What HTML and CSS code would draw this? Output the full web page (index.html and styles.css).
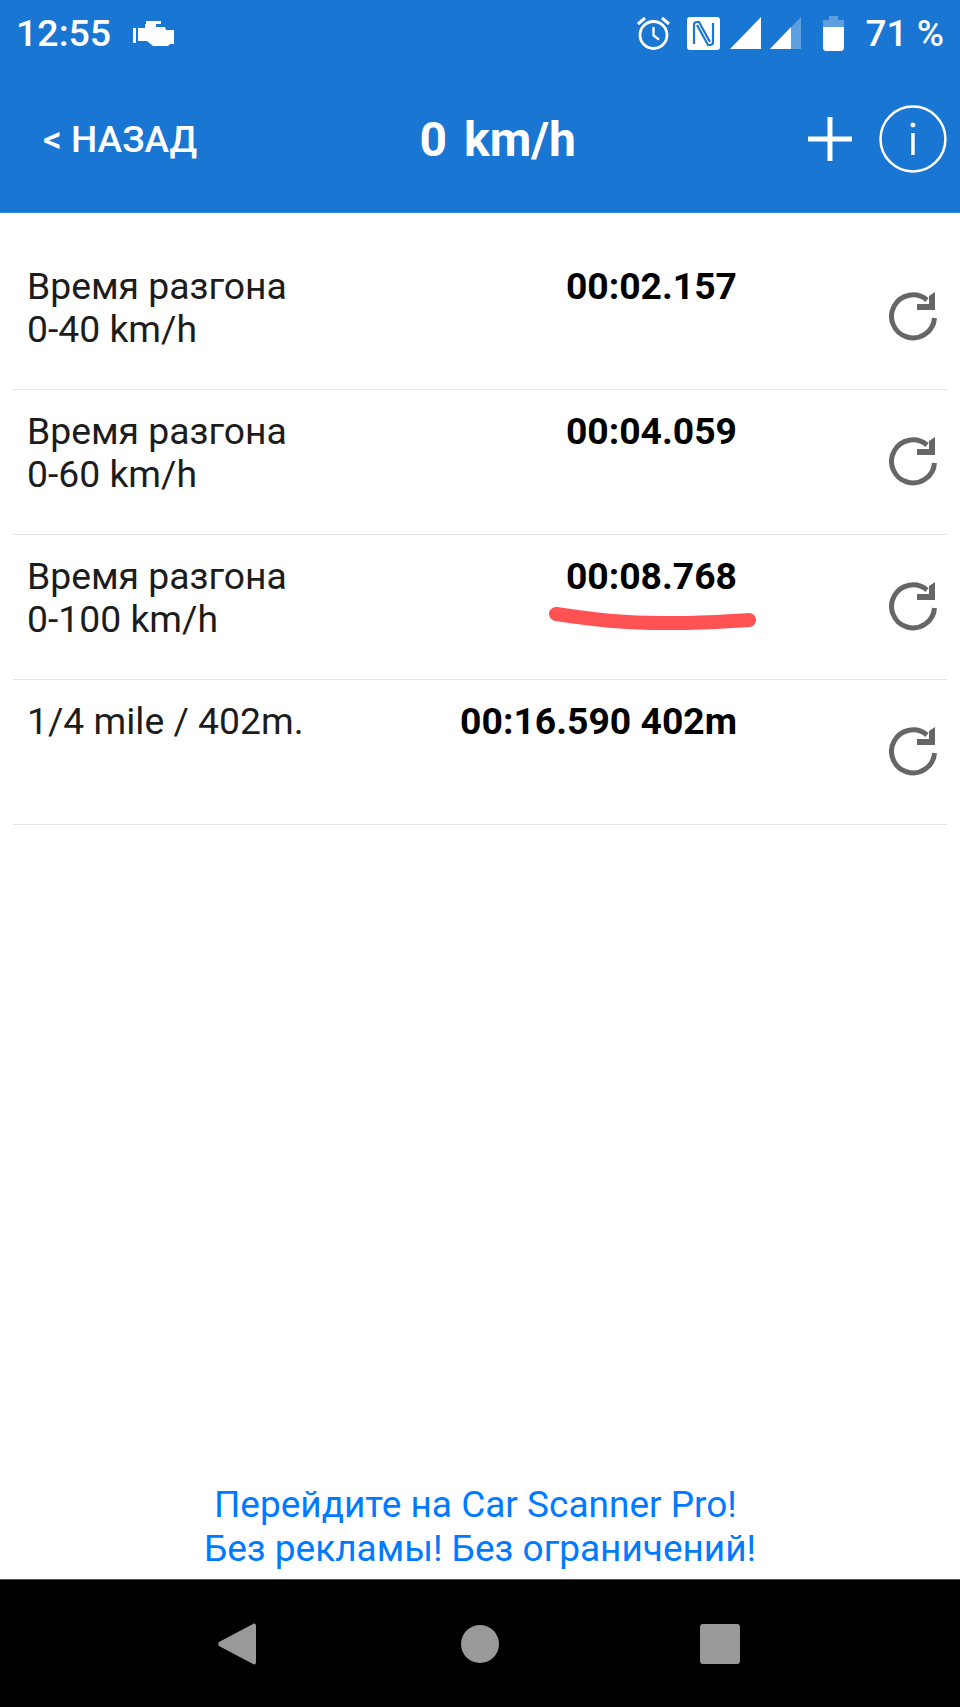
FILE: index.html
```html
<!DOCTYPE html>
<html lang="ru">
<head>
    <meta charset="UTF-8">
    <meta name="viewport" content="width=device-width, initial-scale=1.0">
    <title>Время разгона</title>
    <link rel="stylesheet" href="styles.css">
</head>
<body>
    <div class="screen">
        <header class="header">
            <div class="status-bar">
                <span class="clock">12:55</span>
                <svg class="engine" width="41" height="25" viewBox="0 0 41 25"><path d="M0 7H3V22H0ZM5 7H12V3H13V0H28V3H23V6H32L33 9H41V23H37L35 25H20L14 20H5Z" fill="#fff"/></svg>
                <div class="status-icons">
                    <svg width="33" height="34" viewBox="0 0 33 34"><circle cx="16.500" cy="19" r="13.500" fill="none" stroke="#fff" stroke-width="2.800"/><path d="M16.500 11V19.500L22 23.500" fill="none" stroke="#fff" stroke-width="2.400"/><path d="M1 8L8 2M32 8L25 2" fill="none" stroke="#fff" stroke-width="3"/></svg>
                    <svg width="33" height="33" viewBox="0 0 33 33"><rect width="33" height="33" rx="3" fill="#fff"/><path d="M7 27V8Q7 5 10 5H12L23 25M26 6V25Q26 28 23 28H21L10 8" fill="none" stroke="#1976d2" stroke-width="2.200"/></svg>
                    <svg width="31" height="32" viewBox="0 0 31 32"><path d="M31 0V32H0Z" fill="#fff"/></svg>
                    <svg class="signal" width="31" height="32" viewBox="0 0 31 32"><path d="M31 0V32H0Z" fill="#fff" opacity="0.300"/><path d="M21 10V32H0Z" fill="#fff"/></svg>
                    <svg class="battery" width="21" height="35" viewBox="0 0 21 35"><path d="M0 4H6V0H15V4H21V11H0Z" fill="#fff" opacity="0.300"/><path d="M0 11H21V33L19 35H2L0 33Z" fill="#fff"/></svg>
                    <span class="percent">71 %</span>
                </div>
            </div>
            <div class="toolbar">
                <span class="back">&lt; НАЗАД</span>
                <span class="speed">0 km/h</span>
                <svg class="plus" width="44" height="44" viewBox="0 0 44 44"><path d="M22 0V44M0 22H44" stroke="#fff" stroke-width="5"/></svg>
                <svg class="info" width="68" height="68" viewBox="0 0 68 68"><circle cx="34" cy="34" r="32.500" fill="none" stroke="#fff" stroke-width="2.500"/><circle cx="34" cy="20" r="2.500" fill="#fff"/><path d="M34 28V50" stroke="#fff" stroke-width="3.500"/></svg>
            </div>
        </header>

        <main class="list">
            <div class="row">
                <div class="label">Время разгона<br>0-40 km/h</div>
                <div class="value">00:02.157</div>
                <svg class="refresh" width="48" height="50" viewBox="0 -2 48 50"><path d="M45.500 25A21.500 21.500 0 1 1 38 7" fill="none" stroke="#666" stroke-width="5"/><path d="M46 -1V17H28V11H40V3Z" fill="#666"/></svg>
            </div>
            <div class="row">
                <div class="label">Время разгона<br>0-60 km/h</div>
                <div class="value">00:04.059</div>
                <svg class="refresh" width="48" height="50" viewBox="0 -2 48 50"><path d="M45.500 25A21.500 21.500 0 1 1 38 7" fill="none" stroke="#666" stroke-width="5"/><path d="M46 -1V17H28V11H40V3Z" fill="#666"/></svg>
            </div>
            <div class="row">
                <div class="label">Время разгона<br>0-100 km/h</div>
                <div class="value">00:08.768</div>
                <svg class="refresh" width="48" height="50" viewBox="0 -2 48 50"><path d="M45.500 25A21.500 21.500 0 1 1 38 7" fill="none" stroke="#666" stroke-width="5"/><path d="M46 -1V17H28V11H40V3Z" fill="#666"/></svg>
                <svg class="scribble" width="210" height="23" viewBox="0 0 210 23"><path d="M8 7C30 10 70 17 125 16C160 16 180 14 201 13" fill="none" stroke="#ff5252" stroke-width="14" stroke-linecap="round"/></svg>
            </div>
            <div class="row">
                <div class="label">1/4 mile / 402m.</div>
                <div class="value">00:16.590 402m</div>
                <svg class="refresh" width="48" height="50" viewBox="0 -2 48 50"><path d="M45.500 25A21.500 21.500 0 1 1 38 7" fill="none" stroke="#666" stroke-width="5"/><path d="M46 -1V17H28V11H40V3Z" fill="#666"/></svg>
            </div>
        </main>

        <div class="promo">Перейдите на Car Scanner Pro!&nbsp;<br>Без рекламы! Без ограничений!</div>

        <nav class="nav-bar">
            <svg width="38" height="42" viewBox="0 0 38 42"><path d="M35 1C37 0 38 1 38 3V39C38 41 37 42 35 41L1 23C0 22 0 20 1 19Z" fill="#999"/></svg>
            <div class="home"></div>
            <div class="recent"></div>
        </nav>
    </div>
</body>
</html>
```

FILE: styles.css
```css
body {
    font-family: 'Roboto', sans-serif;
    margin: 0;
    padding: 0;
    background-color: #fff;
}

.screen {
    width: 960px;
    height: 1707px;
    display: flex;
    flex-direction: column;
    overflow: hidden;
}

.header {
    height: 212px;
    background-color: #1976d2;
    border-bottom: 1px solid #2e8fe8;
    color: #fff;
}

.status-bar {
    height: 66px;
    display: flex;
    align-items: center;
    padding: 0 16px;
}

.clock {
    font-size: 37.500px;
    font-weight: 500;
}

.engine {
    margin-left: 22px;
}

.status-icons {
    margin-left: auto;
    display: flex;
    align-items: center;
    gap: 10px;
}

.status-icons svg:first-child {
    margin-right: 7px;
}

.signal {
    margin-left: -1px;
}

.battery {
    margin: 0 12px;
}

.percent {
    font-size: 37px;
    font-weight: 500;
    white-space: nowrap;
}

.toolbar {
    display: flex;
    align-items: center;
    height: 106px;
    margin-top: 20px;
    padding: 0 13px 0 43px;
}

.back {
    width: 377px;
    font-size: 37px;
    font-weight: 500;
}

.speed {
    width: 389px;
    font-size: 48px;
    font-weight: 700;
    word-spacing: 5px;
}

.plus {
    margin-right: 27px;
}

.list {
    flex: 1;
    padding-top: 32px;
}

.row {
    position: relative;
    height: 124px;
    margin: 0 13px;
    padding: 20px 10px 0 14px;
    display: grid;
    grid-template-columns: 1fr auto 48px;
    column-gap: 152px;
    align-items: start;
    border-bottom: 1px solid #e4e4e4;
}

.label {
    font-size: 37.300px;
    line-height: 43px;
    color: #1c1c1c;
}

.value {
    font-size: 37.300px;
    line-height: 43px;
    font-weight: 700;
    color: #000;
}

.refresh {
    margin-top: 26px;
}

.scribble {
    position: absolute;
    left: 535px;
    top: 72px;
}

.promo {
    font-size: 37px;
    line-height: 44px;
    color: #007aff;
    text-align: center;
    padding-bottom: 8px;
}

.nav-bar {
    height: 127px;
    background-color: #000;
    border-top: 1px solid #555;
    display: flex;
    align-items: center;
    padding: 0 220px 0 218px;
    justify-content: space-between;
}

.home {
    width: 38px;
    height: 38px;
    margin-left: 4px;
    border-radius: 50%;
    background-color: #999;
}

.recent {
    width: 40px;
    height: 40px;
    border-radius: 3px;
    background-color: #999;
}
```
